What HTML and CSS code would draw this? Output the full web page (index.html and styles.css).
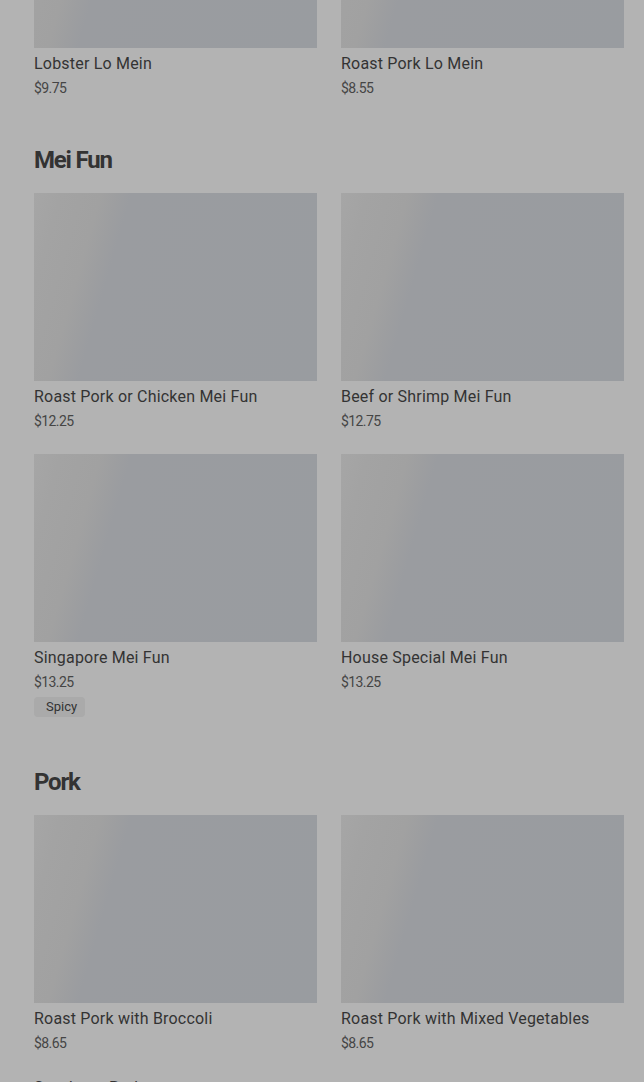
FILE: index.html
```html
<!DOCTYPE html>
<html lang="en">
<head>
<meta charset="utf-8">
<title>Menu</title>
<link rel="stylesheet" href="styles.css">
</head>
<body>
<main class="menu">
  <section class="section section-first">
    <div class="grid">
      <div class="card">
        <div class="thumb"></div>
        <div class="name">Lobster Lo Mein</div>
        <div class="price">$9.75</div>
      </div>
      <div class="card">
        <div class="thumb"></div>
        <div class="name">Roast Pork Lo Mein</div>
        <div class="price">$8.55</div>
      </div>
    </div>
  </section>

  <section class="section">
    <h2 class="section-title">Mei Fun</h2>
    <div class="grid">
      <div class="card">
        <div class="thumb"></div>
        <div class="name">Roast Pork or Chicken Mei Fun</div>
        <div class="price">$12.25</div>
      </div>
      <div class="card">
        <div class="thumb"></div>
        <div class="name">Beef or Shrimp Mei Fun</div>
        <div class="price">$12.75</div>
      </div>
      <div class="card">
        <div class="thumb"></div>
        <div class="name">Singapore Mei Fun</div>
        <div class="price">$13.25</div>
        <div class="tags"><span class="tag">Spicy</span></div>
      </div>
      <div class="card">
        <div class="thumb"></div>
        <div class="name">House Special Mei Fun</div>
        <div class="price">$13.25</div>
      </div>
    </div>
  </section>

  <section class="section">
    <h2 class="section-title">Pork</h2>
    <div class="grid">
      <div class="card">
        <div class="thumb"></div>
        <div class="name">Roast Pork with Broccoli</div>
        <div class="price">$8.65</div>
      </div>
      <div class="card">
        <div class="thumb"></div>
        <div class="name">Roast Pork with Mixed Vegetables</div>
        <div class="price">$8.65</div>
      </div>
      <div class="card card-text">
        <div class="name">Szechuan Pork</div>
        <div class="price">$8.65</div>
      </div>
    </div>
  </section>
</main>
</body>
</html>
```

FILE: styles.css
```css
html, body {
  margin: 0;
  padding: 0;
  background: #b3b3b3;
}

body {
  font-family: Roboto, "Liberation Sans", Arial, sans-serif;
  color: #333333;
  overflow: hidden;
}

.menu {
  padding: 0 20px 0 34px;
  margin-top: -140px;
}

.section {
  padding-top: 46px;
}

.section-first {
  padding-top: 0;
}

.section-title {
  margin: 0 0 17px 0;
  font-size: 24px;
  line-height: 32px;
  font-weight: 700;
  letter-spacing: -1.2px;
  color: #333333;
}

.grid {
  display: grid;
  grid-template-columns: 1fr 1fr;
  column-gap: 24px;
  row-gap: 23px;
  align-items: start;
}

.card {
  display: flex;
  flex-direction: column;
}

.card-text {
  margin-top: -4px;
}

.thumb {
  height: 188px;
  background: linear-gradient(106deg, #a6a6a6 0%, #a3a3a3 8%, #a1a1a1 20%, #9d9ea0 25%, #9a9ca0 29%, #999ca0 100%);
}

.name {
  margin-top: 4px;
  font-size: 16px;
  line-height: 24px;
  font-weight: 400;
  letter-spacing: 0.2px;
  color: #333333;
}

.price {
  margin-top: 2px;
  font-size: 14px;
  line-height: 20px;
  color: #454545;
  letter-spacing: -0.6px;
}

.tags {
  display: flex;
  margin: 5px 0 3px 0;
}

.tag {
  display: inline-block;
  height: 20px;
  line-height: 20px;
  padding: 0 8px 0 12px;
  font-size: 13px;
  color: #333333;
  background: #aaaaaa;
  border-radius: 4px;
}
```
